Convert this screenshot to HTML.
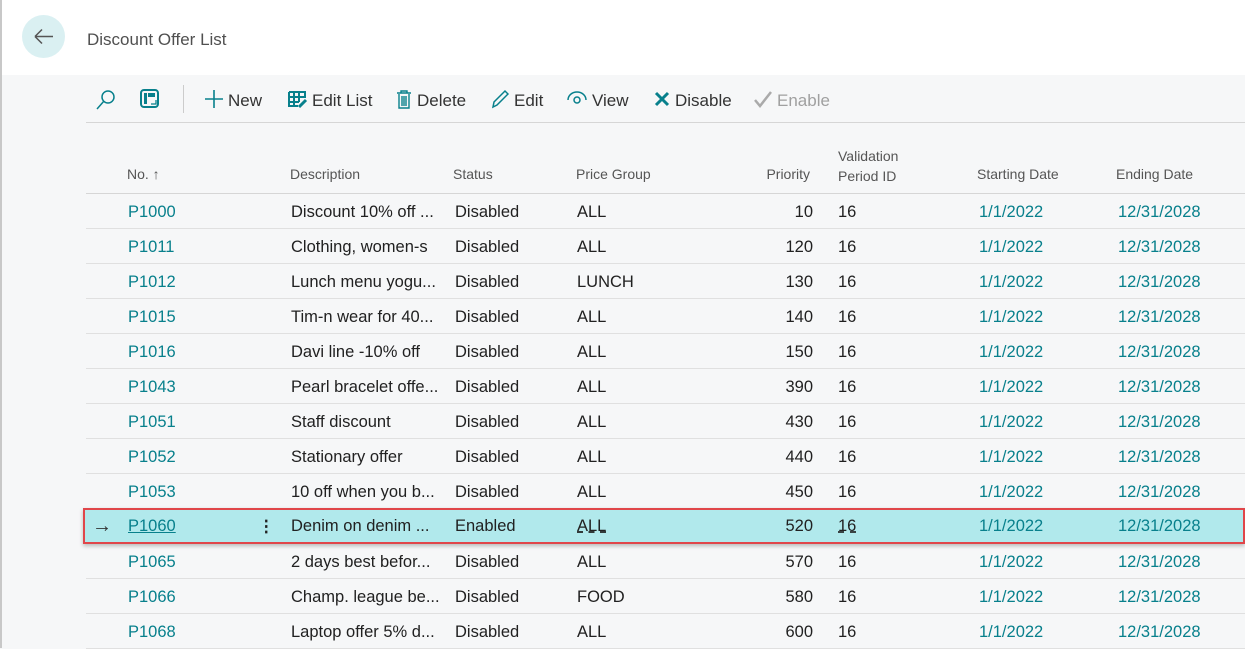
<!DOCTYPE html>
<html><head><meta charset="utf-8"><style>
*{margin:0;padding:0;box-sizing:border-box}
body{width:1245px;height:648px;overflow:hidden;background:#f6f7f8;font-family:"Liberation Sans",sans-serif;position:relative;color:#212121}
.top{position:absolute;left:0;top:0;width:1245px;height:75px;background:#fff;border-left:2px solid #c8c8c8}
.left{position:absolute;left:0;top:0;width:2px;height:648px;background:#c8c8c8}
.back{position:absolute;left:22px;top:15px;width:43px;height:43px;border-radius:50%;background:#daf0f2}
.title{position:absolute;left:87px;top:30px;font-size:17px;color:#505050}
.tb{position:absolute;top:89px;font-size:17px;color:#333;white-space:nowrap}
.tb svg{vertical-align:-3px;margin-right:4px}
.hsep{position:absolute;left:86px;width:1159px;height:1px;background:#d6d6d6}
.h{position:absolute;font-size:14px;color:#555}
.row{position:absolute;left:86px;width:1159px;height:35px;border-bottom:1px solid #e0e0e0;font-size:16.5px}
.row span{position:absolute;top:9px;white-space:nowrap}
.l{color:#08808c}
.sel{background:#b1e9ec;border:2px solid #e0464a;left:83px;width:1162px;box-shadow:0 2px 4px rgba(0,0,0,.25)}
</style></head><body>
<div class="top"></div><div class="left"></div>
<div class="back"><svg width="43" height="43"><path d="M13 21.5h18M13 21.5l7-7M13 21.5l7 7" stroke="#555" stroke-width="1.5" fill="none"/></svg></div>
<div class="title">Discount Offer List</div>
<svg style="position:absolute;left:95px;top:89px" width="22" height="22"><circle cx="13" cy="8" r="6" stroke="#08808c" stroke-width="1.5" fill="none"/><path d="M9 12l-7 8" stroke="#08808c" stroke-width="1.5"/></svg>
<svg style="position:absolute;left:139px;top:88px" width="22" height="22"><rect x="2" y="2" width="17" height="17" rx="3" stroke="#08808c" stroke-width="2" fill="none"/><rect x="5" y="5" width="3" height="11" fill="#08808c"/><rect x="9" y="5" width="7" height="4" fill="#08808c"/><path d="M12 16h5v-4" stroke="#08808c" stroke-width="1.3" fill="none"/></svg>
<div style="position:absolute;left:183px;top:85px;width:1px;height:28px;background:#ccc"></div>
<div class="tb" style="left:204px"><svg width="20" height="20"><path d="M10 1v18M1 10h18" stroke="#08808c" stroke-width="1.6"/></svg>New</div>
<div class="tb" style="left:288px"><svg width="20" height="20"><path d="M1 3h16v6M1 3v14h9M1 8h16M1 13h10M6 3v14M11 3v10" stroke="#08808c" stroke-width="2" fill="none"/><path d="M11 18l7-7" stroke="#08808c" stroke-width="3"/></svg>Edit List</div>
<div class="tb" style="left:395px"><svg width="18" height="20"><path d="M2 4h14M6 4V2h6v2M4 5v14h10V5M7 7v10M9 7v10M11 7v10" stroke="#08808c" stroke-width="1.4" fill="none"/></svg>Delete</div>
<div class="tb" style="left:490px"><svg width="20" height="20"><path d="M3 18l1-5L15 2l3 3L7 16z" stroke="#08808c" stroke-width="1.5" fill="none"/></svg>Edit</div>
<div class="tb" style="left:566px"><svg width="22" height="20"><path d="M2 11a9 8 0 0 1 18 0" stroke="#08808c" stroke-width="1.5" fill="none"/><circle cx="11" cy="11" r="3" stroke="#08808c" stroke-width="1.5" fill="none"/></svg>View</div>
<div class="tb" style="left:653px"><svg width="18" height="20"><path d="M3 4l12 12M15 4L3 16" stroke="#08808c" stroke-width="3"/></svg>Disable</div>
<div class="tb" style="left:753px;color:#a0a0a0"><svg width="20" height="20"><path d="M2 11l5 6L18 3" stroke="#aaa" stroke-width="2.5" fill="none"/></svg>Enable</div>
<div class="hsep" style="top:122px"></div>
<div class="h" style="left:127px;top:166px">No. ↑</div>
<div class="h" style="left:290px;top:166px">Description</div>
<div class="h" style="left:453px;top:166px">Status</div>
<div class="h" style="left:576px;top:166px">Price Group</div>
<div class="h" style="left:740px;width:70px;text-align:right;top:166px">Priority</div>
<div class="h" style="left:838px;top:146px;line-height:20px">Validation<br>Period ID</div>
<div class="h" style="left:977px;top:166px">Starting Date</div>
<div class="h" style="left:1116px;top:166px">Ending Date</div>
<div class="hsep" style="top:193px"></div>
<div id="rows"></div>
<script>
var d=[["P1000","Discount 10% off ...","Disabled","ALL","10"],["P1011","Clothing, women-s","Disabled","ALL","120"],["P1012","Lunch menu yogu...","Disabled","LUNCH","130"],["P1015","Tim-n wear for 40...","Disabled","ALL","140"],["P1016","Davi line -10% off","Disabled","ALL","150"],["P1043","Pearl bracelet offe...","Disabled","ALL","390"],["P1051","Staff discount","Disabled","ALL","430"],["P1052","Stationary offer","Disabled","ALL","440"],["P1053","10 off when you b...","Disabled","ALL","450"],["P1060","Denim on denim ...","Enabled","ALL","520"],["P1065","2 days best befor...","Disabled","ALL","570"],["P1066","Champ. league be...","Disabled","FOOD","580"],["P1068","Laptop offer 5% d...","Disabled","ALL","600"]];
var h="";d.forEach(function(r,i){var s=i==9;var t=194+35*i;var o=s?1:0;
h+='<div class="row'+(s?' sel':'')+'" style="top:'+(s?t-1:t)+'px;'+(s?'height:36px':'')+'">'+
(s?'<span style="left:7px;top:5px;color:#333;font-size:20px">→</span><span style="left:173px;top:7px;font-weight:bold">⋮</span>':'')+
'<span class="l" style="left:'+(42+o)+'px;'+(s?'text-decoration:underline;top:7px':'')+'">'+r[0]+'</span>'+
'<span style="left:'+(205+o)+'px;'+(s?'top:7px':'')+'">'+r[1]+'</span>'+
'<span style="left:'+(369+o)+'px;'+(s?'top:7px':'')+'">'+r[2]+'</span>'+
'<span style="left:'+(491+o)+'px;'+(s?'text-decoration:underline dashed;top:7px':'')+'">'+r[3]+'</span>'+
'<span style="left:'+(647+o)+'px;width:80px;text-align:right;'+(s?'top:7px':'')+'">'+r[4]+'</span>'+
'<span style="left:'+(752+o)+'px;'+(s?'text-decoration:underline dashed;top:7px':'')+'">16</span>'+
'<span class="l" style="left:'+(893+o)+'px;'+(s?'top:7px':'')+'">1/1/2022</span>'+
'<span class="l" style="left:'+(1032+o)+'px;'+(s?'top:7px':'')+'">12/31/2028</span></div>';});
document.getElementById("rows").innerHTML=h;
</script>
</body></html>
